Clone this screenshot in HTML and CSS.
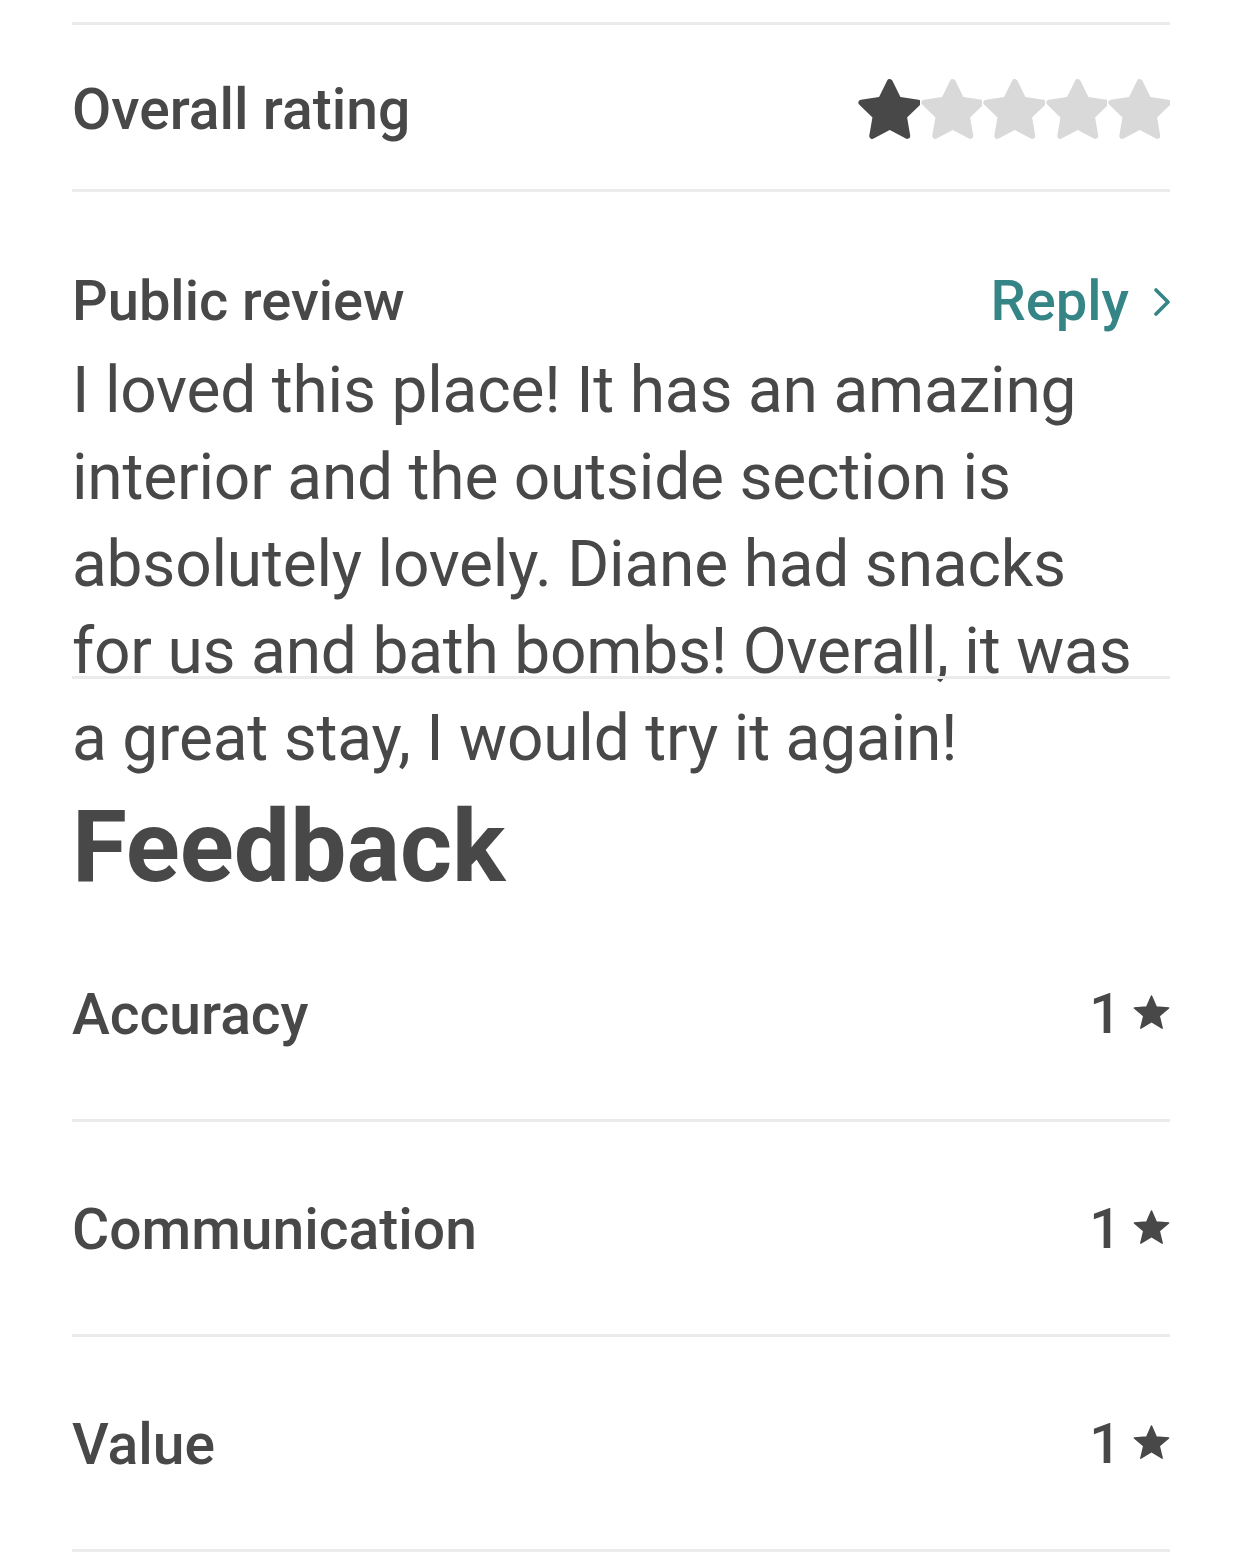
FILE: index.html
```html
<!DOCTYPE html>
<html lang="en">
<head>
<meta charset="utf-8">
<title>Review</title>
<link rel="stylesheet" href="styles.css">
</head>
<body>
<main class="page">
  <div class="rule rule-top"></div>
  <section class="overall">
    <h2 class="label">Overall rating</h2>
    <div class="stars" aria-label="1 out of 5 stars">
      <svg class="star star-on" viewBox="-1 -1 21.02 20.1"><polygon points="10,0 12.94,5.96 19.51,6.91 14.76,11.55 15.88,18.09 10,15 4.12,18.09 5.25,11.55 0.49,6.91 7.06,5.96"/></svg>
      <svg class="star star-off" viewBox="-1 -1 21.02 20.1"><polygon points="10,0 12.94,5.96 19.51,6.91 14.76,11.55 15.88,18.09 10,15 4.12,18.09 5.25,11.55 0.49,6.91 7.06,5.96"/></svg>
      <svg class="star star-off" viewBox="-1 -1 21.02 20.1"><polygon points="10,0 12.94,5.96 19.51,6.91 14.76,11.55 15.88,18.09 10,15 4.12,18.09 5.25,11.55 0.49,6.91 7.06,5.96"/></svg>
      <svg class="star star-off" viewBox="-1 -1 21.02 20.1"><polygon points="10,0 12.94,5.96 19.51,6.91 14.76,11.55 15.88,18.09 10,15 4.12,18.09 5.25,11.55 0.49,6.91 7.06,5.96"/></svg>
      <svg class="star star-off" viewBox="-1 -1 21.02 20.1"><polygon points="10,0 12.94,5.96 19.51,6.91 14.76,11.55 15.88,18.09 10,15 4.12,18.09 5.25,11.55 0.49,6.91 7.06,5.96"/></svg>
    </div>
  </section>
  <div class="rule"></div>

  <section class="review">
    <div class="review-head">
      <h3 class="review-title">Public review</h3>
      <a class="reply" href="#">Reply
        <svg class="chevron" viewBox="0 0 16 28"><polyline points="2,2 14,14 2,26"/></svg>
      </a>
    </div>
    <div class="review-body">
      <p class="review-text">I loved this place! It has an amazing interior and the outside section is absolutely lovely. Diane had snacks for us and bath bombs! Overall, it was a great stay, I would try it again!</p>
      <div class="rule rule-over"></div>
    </div>
  </section>

  <h1 class="feedback-title">Feedback</h1>

  <ul class="feedback-list">
    <li class="feedback-row">
      <span class="label">Accuracy</span>
      <span class="score">1<svg class="mini-star" viewBox="0 0 20 19"><polygon points="10,0.5 12.6,6.5 19.3,7 14.2,11.4 15.8,18 10,14.5 4.2,18 5.8,11.4 0.7,7 7.4,6.5"/></svg></span>
    </li>
    <li class="feedback-row">
      <span class="label">Communication</span>
      <span class="score">1<svg class="mini-star" viewBox="0 0 20 19"><polygon points="10,0.5 12.6,6.5 19.3,7 14.2,11.4 15.8,18 10,14.5 4.2,18 5.8,11.4 0.7,7 7.4,6.5"/></svg></span>
    </li>
    <li class="feedback-row">
      <span class="label">Value</span>
      <span class="score">1<svg class="mini-star" viewBox="0 0 20 19"><polygon points="10,0.5 12.6,6.5 19.3,7 14.2,11.4 15.8,18 10,14.5 4.2,18 5.8,11.4 0.7,7 7.4,6.5"/></svg></span>
    </li>
  </ul>
</main>
</body>
</html>
```
FILE: styles.css
```css
* { box-sizing: border-box; }

html, body {
  margin: 0;
  padding: 0;
  background: #ffffff;
}

body {
  font-family: "Roboto", "Liberation Sans", sans-serif;
  color: #484848;
}

.page {
  padding: 0 72px;
  width: 1242px;
}

.rule {
  height: 3px;
  background: #ebebeb;
}

.rule-top {
  margin-top: 22px;
}

/* Overall rating */
.overall {
  height: 164px;
  padding-top: 4px;
  display: flex;
  align-items: center;
  justify-content: space-between;
}

.label {
  margin: 0;
  font-size: 57px;
  font-weight: 500;
  line-height: 69px;
  color: #484848;
}

.stars {
  display: flex;
  align-items: center;
}

.star {
  width: 62.6px;
  height: 60px;
  display: block;
}

.star polygon {
  stroke-width: 2;
  stroke-linejoin: round;
}

.star-on polygon { fill: #484848; stroke: #484848; }
.star-off polygon { fill: #d9d9d9; stroke: #d9d9d9; }

/* Public review */
.review {
  margin-top: 76px;
}

.review-head {
  display: flex;
  align-items: baseline;
  justify-content: space-between;
}

.review-title {
  margin: 0;
  font-size: 56px;
  font-weight: 500;
  line-height: 67px;
}

.reply {
  display: flex;
  align-items: center;
  gap: 25px;
  font-size: 56px;
  font-weight: 500;
  line-height: 67px;
  color: #368586;
  text-decoration: none;
}

.chevron {
  width: 16px;
  height: 28px;
  display: block;
}

.chevron polyline {
  fill: none;
  stroke: #368586;
  stroke-width: 3.6;
  stroke-linecap: round;
  stroke-linejoin: round;
}

.review-body {
  position: relative;
  margin-top: 12px;
}

.review-text {
  margin: 0;
  width: 1075px;
  font-size: 64px;
  font-weight: 400;
  line-height: 87px;
  letter-spacing: -0.2px;
}

.rule-over {
  position: absolute;
  left: 0;
  right: 0;
  top: 329px;
}

/* Feedback */
.feedback-title {
  margin: 10px 0 0;
  font-size: 100px;
  font-weight: 700;
  line-height: 110px;
  letter-spacing: 0;
}

.feedback-list {
  list-style: none;
  margin: 5px 0 0;
  padding: 0;
}

.feedback-row {
  display: flex;
  align-items: center;
  justify-content: space-between;
  padding: 73px 0 70px;
  border-bottom: 3px solid #ebebeb;
}

.score {
  display: flex;
  align-items: center;
  gap: 12px;
  font-size: 56px;
  font-weight: 500;
  line-height: 69px;
}

.mini-star {
  width: 37px;
  height: 35px;
  display: block;
  margin-top: -4px;
}

.mini-star polygon {
  fill: #484848;
  stroke: #484848;
  stroke-width: 0.8;
  stroke-linejoin: round;
}
```
